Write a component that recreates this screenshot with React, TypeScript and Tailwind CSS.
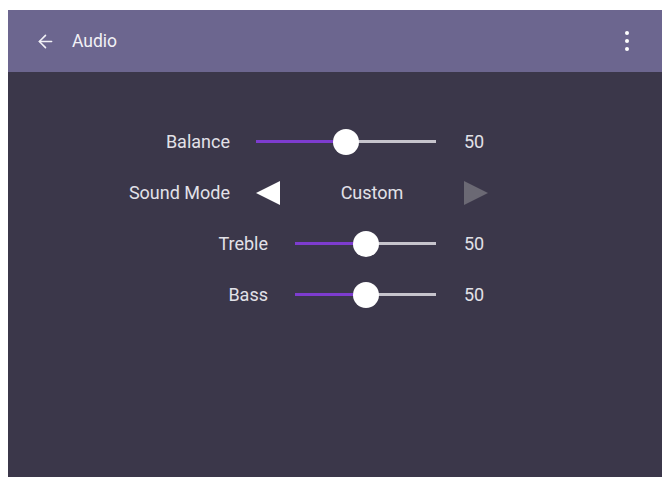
import { ArrowLeft } from "lucide-react";

function Slider({ width }: { width: number }) {
  return (
    <div className="relative flex h-[28px] items-center" style={{ width }}>
      <div className="h-[3px] w-1/2 bg-[#7d3ccf]" />
      <div className="h-[3px] w-1/2 bg-[#c6c4cc]" />
      <div className="absolute left-1/2 top-1/2 h-[26px] w-[26px] -translate-x-1/2 -translate-y-1/2 rounded-full bg-white" />
    </div>
  );
}

function SliderRow({ label, labelW, gap, width }: { label: string; labelW: number; gap: number; width: number }) {
  return (
    <div className="flex h-[51px] items-center">
      <div className="text-right" style={{ width: labelW }}>
        {label}
      </div>
      <div style={{ marginLeft: gap }}>
        <Slider width={width} />
      </div>
      <div className="ml-[28px]">50</div>
    </div>
  );
}

export default function App() {
  return (
    <div className="h-[479px] w-[668px] bg-white pl-[8px] pt-[10px] font-['Roboto',sans-serif]">
      <div className="flex h-[467px] w-[654px] flex-col bg-[#3b374a]">
        <header className="flex h-[62px] items-center bg-[#6c668f] pl-[27px] pr-[33px] text-[#f2f1f6]">
          <ArrowLeft size={21} strokeWidth={1.8} />
          <span className="ml-[16px] text-[17.5px]">Audio</span>
          <div className="ml-auto flex flex-col gap-[4px]">
            <span className="h-[4px] w-[4px] rounded-full bg-white" />
            <span className="h-[4px] w-[4px] rounded-full bg-white" />
            <span className="h-[4px] w-[4px] rounded-full bg-white" />
          </div>
        </header>
        <main className="pt-[44px] text-[18px] text-[#e2e1e8]">
          <SliderRow label="Balance" labelW={222} gap={26} width={180} />
          <div className="flex h-[51px] items-center">
            <div className="w-[222px] text-right">Sound Mode</div>
            <svg className="ml-[26px]" width="24" height="24" viewBox="0 0 24 24">
              <polygon points="0,12 24,0 24,24" fill="#ffffff" />
            </svg>
            <div className="w-[184px] text-center">Custom</div>
            <svg width="24" height="24" viewBox="0 0 24 24">
              <polygon points="0,0 24,12 0,24" fill="#6b6974" />
            </svg>
          </div>
          <SliderRow label="Treble" labelW={260} gap={27} width={141} />
          <SliderRow label="Bass" labelW={260} gap={27} width={141} />
        </main>
      </div>
    </div>
  );
}
